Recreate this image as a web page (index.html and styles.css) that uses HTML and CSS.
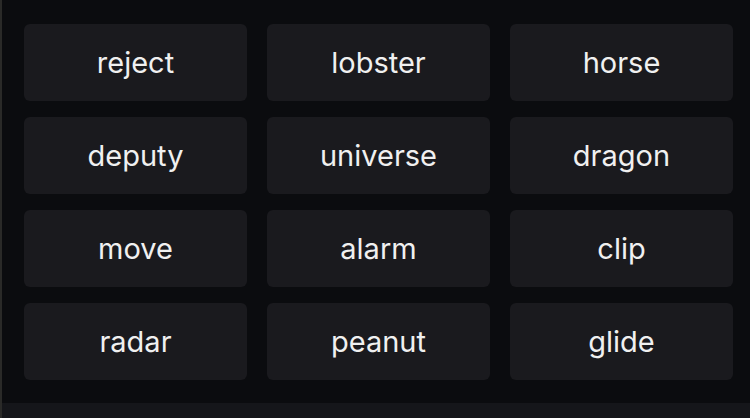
FILE: index.html
```html
<!DOCTYPE html>
<html>
<head>
<meta charset="utf-8">
<link rel="stylesheet" href="styles.css">
</head>
<body>
<div class="screen">
  <div class="board">
    <div class="grid">
      <div class="tile">reject</div>
      <div class="tile">lobster</div>
      <div class="tile">horse</div>
      <div class="tile">deputy</div>
      <div class="tile">universe</div>
      <div class="tile">dragon</div>
      <div class="tile">move</div>
      <div class="tile">alarm</div>
      <div class="tile">clip</div>
      <div class="tile">radar</div>
      <div class="tile">peanut</div>
      <div class="tile">glide</div>
    </div>
  </div>
  <div class="strip"></div>
</div>
</body>
</html>
```
FILE: styles.css
```css
html, body {
  margin: 0;
  padding: 0;
  background: #0b0c0f;
}
.screen {
  width: 750px;
  height: 418px;
  display: flex;
  flex-direction: column;
  overflow: hidden;
  border-left: 2px solid #2a2a28;
  box-sizing: border-box;
}
.board {
  height: 403px;
  background: #0b0c0f;
  padding: 24px 0 0 22px;
  box-sizing: border-box;
}
.grid {
  display: grid;
  grid-template-columns: repeat(3, 223px);
  grid-auto-rows: 77px;
  column-gap: 20px;
  row-gap: 16px;
}
.tile {
  background: #1a1a1e;
  border-radius: 6px;
  display: flex;
  align-items: center;
  justify-content: center;
  color: #f0f0f0;
  font-family: Inter, "Liberation Sans", sans-serif;
  font-size: 29px;
  font-weight: 400;
  box-sizing: border-box;
}
.strip {
  flex: 1;
  background: #15161a;
}
```
